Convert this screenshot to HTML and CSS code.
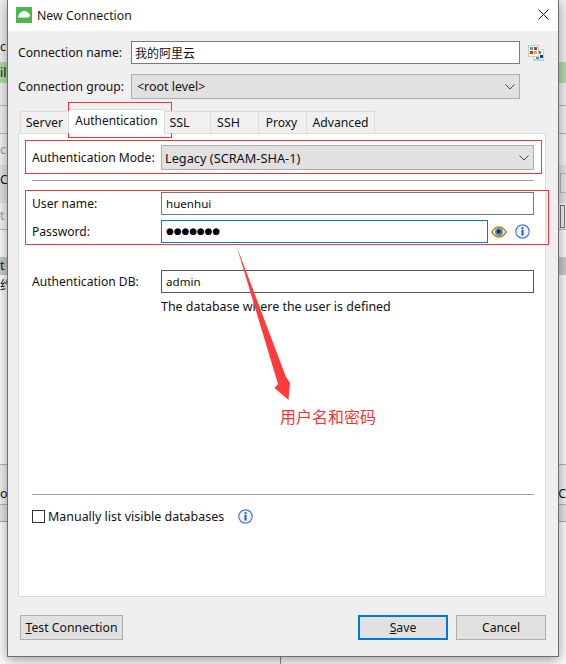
FILE: index.html
```html
<!DOCTYPE html>
<html lang="en">
<head>
<meta charset="utf-8">
<title>New Connection</title>
<link rel="stylesheet" href="styles.css">
</head>
<body>
<div class="desktop">
  <div class="backdrop">
    <div class="bg bg-a"></div>
    <div class="bg bg-b"><span>c</span></div>
    <div class="bg bg-green"><span>il</span></div>
    <div class="bg bg-c"></div>
    <div class="bg bg-d"></div>
    <div class="bg bg-e"><span class="muted">ct</span></div>
    <div class="bg bg-f"><span>Cc</span><i class="bg-btn"></i></div>
    <div class="bg bg-g"><span class="muted">t</span><i class="bg-box"></i></div>
    <div class="bg bg-h"></div>
    <div class="bg bg-i"><span>t</span></div>
    <div class="bg bg-j"><span class="cjk">约</span></div>
    <div class="bg bg-k"><span>or</span><span>C</span></div>
    <div class="bg bg-l"></div>
    <div class="bg bg-m"><i class="bg-vline"></i></div>
  </div>

  <div class="dialog">
    <div class="titlebar">
      <svg class="app-icon" viewBox="0 0 16 16" aria-hidden="true">
        <rect width="16" height="16" fill="#4cb84c"/>
        <path d="M2 10.500C2.600 6.500 5.200 4 8.300 4c3 0 5 2 6 5.300l-1.400.2-.8 1.600-1.500-1.200-1.200 1.400-1.300-1.400-1.600 1.300-1-1.300-1.200 1.300-.6-.9z" fill="#fff"/>
      </svg>
      <span class="title">New Connection</span>
      <svg class="close" viewBox="0 0 11 11" aria-hidden="true"><path d="M.5.5l10 10M10.500.5l-10 10" stroke="#222" stroke-width="1" fill="none"/></svg>
    </div>

    <div class="body">
      <div class="top-row">
        <span class="top-label">Connection name:</span>
        <div class="field name-field cjk-text">我的阿里云</div>
        <svg class="palette" viewBox="0 0 16 16" aria-hidden="true">
          <rect x="5" y="4" width="11" height="12" fill="#ccc"/>
          <rect x="6" y="5" width="9" height="9" fill="#fff"/>
          <rect x="10" y="6" width="3" height="3" fill="#5a9a10"/>
          <rect x="12" y="10" width="3" height="3" fill="#1a30b0"/>
          <rect x="8" y="11" width="3" height="3" fill="#20a8f0"/>
          <rect x="0" y="0" width="11" height="12" fill="#ccc"/>
          <rect x="1" y="1" width="9" height="10" fill="#fff"/>
          <rect x="2" y="2" width="3" height="3" fill="#22d040"/>
          <rect x="6" y="2" width="3" height="3" fill="#a020e0"/>
          <rect x="2" y="6" width="3" height="3" fill="#f02a10"/>
          <rect x="6" y="6" width="3" height="3" fill="#f5b020"/>
        </svg>
      </div>
      <div class="top-row group-row">
        <span class="top-label">Connection group:</span>
        <div class="combo group-combo">
          <span>&lt;root level&gt;</span>
          <svg class="chevron" viewBox="0 0 10 6" aria-hidden="true"><path d="M.5.5L5 5 9.500.5" fill="none" stroke="#444"/></svg>
        </div>
      </div>

      <div class="tabs">
        <div class="tab tab-server">Server</div>
        <div class="tab tab-active">Authentication</div>
        <div class="tab tab-ssl">SSL</div>
        <div class="tab tab-ssh">SSH</div>
        <div class="tab tab-proxy">Proxy</div>
        <div class="tab tab-adv">Advanced</div>
      </div>

      <div class="pane">
        <div class="form-row">
          <span class="form-label">Authentication Mode:</span>
          <div class="combo mode-combo">
            <span>Legacy (SCRAM-SHA-1)</span>
            <svg class="chevron" viewBox="0 0 10 6" aria-hidden="true"><path d="M.5.5L5 5 9.500.5" fill="none" stroke="#444"/></svg>
          </div>
        </div>
        <hr class="sep sep-top">
        <div class="form-row">
          <span class="form-label">User name:</span>
          <div class="field grow">huenhui</div>
        </div>
        <div class="form-row pass-row">
          <span class="form-label">Password:</span>
          <div class="field focus"><span class="dots">●●●●●●●</span></div>
          <svg class="eye" viewBox="0 0 16 14" aria-hidden="true">
            <path d="M.8 7C3 3.600 5.500 2 8 2s5 1.600 7.200 5C13 10.400 10.500 12 8 12S3 10.400.8 7z" fill="#fff" stroke="#c0851a" stroke-width="1.500"/>
            <circle cx="8" cy="7" r="4" fill="#4d8fc0"/>
            <circle cx="7.600" cy="6.400" r="2" fill="#24323f"/>
          </svg>
          <svg class="info" viewBox="0 0 15 15" aria-hidden="true">
            <circle cx="7.500" cy="7.500" r="6.700" fill="#eef3fe" stroke="#4f74e0" stroke-width="1.200"/>
            <rect x="6.500" y="6" width="2" height="5.500" fill="#2a52b8"/>
            <rect x="6.500" y="3.200" width="2" height="2" fill="#2a52b8"/>
          </svg>
        </div>
        <div class="form-row db-row">
          <span class="form-label">Authentication DB:</span>
          <div class="field grow dark">admin</div>
        </div>
        <div class="help">The database where the user is defined</div>
        <hr class="sep sep-bottom">
        <div class="check-row">
          <i class="checkbox"></i>
          <span class="check-label">Manually list visible databases</span>
          <svg class="info info-check" viewBox="0 0 15 15" aria-hidden="true">
            <circle cx="7.500" cy="7.500" r="6.700" fill="#eef3fe" stroke="#4f74e0" stroke-width="1.200"/>
            <rect x="6.500" y="6" width="2" height="5.500" fill="#2a52b8"/>
            <rect x="6.500" y="3.200" width="2" height="2" fill="#2a52b8"/>
          </svg>
        </div>
      </div>

      <div class="footer">
        <div class="btn btn-test"><span><u>T</u>est Connection</span></div>
        <div class="btn btn-save"><span><u>S</u>ave</span></div>
        <div class="btn btn-cancel">Cancel</div>
      </div>
    </div>
  </div>

  <i class="mark mark-tab"></i>
  <i class="mark mark-mode"></i>
  <i class="mark mark-cred"></i>
  <svg class="arrow" viewBox="0 0 566 664" aria-hidden="true">
    <polygon points="236.500,246 286,377 290,383 288.500,400 274.500,388 278,384" fill="#ff3b3b"/>
  </svg>
  <span class="note">用户名和密码</span>
</div>
</body>
</html>
```

FILE: styles.css
```css
* { box-sizing: border-box; }

html, body {
  margin: 0;
  padding: 0;
}

body {
  font-family: "Noto Sans", "Open Sans", sans-serif;
  font-size: 12.450px;
  color: #111;
  background: #fafafa;
}

.desktop {
  position: relative;
  width: 566px;
  height: 664px;
  overflow: hidden;
}

/* window behind the dialog */
.backdrop {
  display: flex;
  flex-direction: column;
  height: 664px;
}

.bg {
  display: flex;
  justify-content: space-between;
  align-items: center;
  line-height: 16px;
  flex: none;
  background: #f0f0f0;
}

.bg span { white-space: nowrap; }
.muted { color: #999; }
.cjk { font-family: "Noto Sans CJK SC", sans-serif; }

.bg-a { height: 39px; }
.bg-b { height: 23px; align-items: flex-start; }
.bg-green { height: 21px; background: #b0dcaa; }
.bg-c { height: 23px; border-bottom: 1px solid #b5b5b5; }
.bg-d { height: 28px; border-bottom: 1px solid #b5b5b5; }
.bg-e { height: 31px; background: #f4f4f4; }
.bg-f { height: 38px; background: #e3e3e3; padding-bottom: 8px; padding-right: 0; }
.bg-g { height: 27px; background: #f4f4f4; border-bottom: 1px solid #b5b5b5; }
.bg-h { height: 27px; background: #fbfbfb; }
.bg-i { height: 18px; background: #c9c9c9; }
.bg-j { height: 189px; background: #fbfbfb; align-items: flex-start; padding-top: 2px; }
.bg-k {
  height: 41px;
  background: #f0f0f0;
  border-top: 1px solid #b5b5b5;
  border-bottom: 1px solid #b5b5b5;
  padding-top: 18px;
  padding-right: 0;
}
.bg-l { height: 17px; background: #e4e4e4; border-bottom: 1px solid #aaa; }
.bg-m {
  flex: 1;
  background: #fbfbfb;
  align-items: flex-end;
  justify-content: flex-start;
}

.bg-btn {
  width: 6px;
  height: 20px;
  margin-top: 6px;
  background: #e8e8e8;
  border: 1px solid #bbb;
  border-right: 0;
}

.bg-box {
  width: 5px;
  height: 23px;
  margin-right: 1px;
  background: #f4f4f4;
  border: 1px solid #777;
}

.bg-vline {
  height: 8px;
  margin-left: 280px;
  border-left: 1px solid #888;
}

/* dialog */
.dialog {
  position: absolute;
  left: 7px;
  top: 0;
  width: 552px;
  height: 657px;
  display: flex;
  flex-direction: column;
  background: #efefef;
  border: 1px solid #6e6e6e;
  border-top: 0;
  box-shadow: 0 3px 12px rgba(0, 0, 0, .38);
}

.titlebar {
  display: flex;
  align-items: center;
  height: 31px;
  flex: none;
  padding: 0 9px 1px 8px;
  background: #fff;
}

.app-icon { width: 16px; height: 16px; flex: none; }
.title { margin-left: 5px; flex: 1; color: #1a1a1a; font-size: 12.300px; }
.close { width: 11px; height: 11px; margin-top: -1px; }

.body {
  flex: 1;
  display: flex;
  flex-direction: column;
  padding: 10px 12px 0 10px;
}

.top-row {
  display: flex;
  align-items: center;
  height: 23px;
}

.group-row {
  height: 25px;
  margin-top: 10px;
}

.top-label { width: 113px; flex: none; white-space: nowrap; font-size: 12.150px; }

.field {
  display: flex;
  align-items: center;
  height: 23px;
  padding-left: 4px;
  background: #fff;
  border: 1px solid #7a7a7a;
  white-space: nowrap;
  font-size: 11.600px;
}

.name-field {
  width: 389px;
  flex: none;
  padding-left: 3px;
  font-size: 12px;
}
.cjk-text { font-family: "Noto Sans", "Noto Sans CJK SC", sans-serif; }

.grow { flex: 1; }
.dark { border-color: #555; }
.focus { width: 327px; flex: none; border-color: #0078d7; }

.combo {
  display: flex;
  align-items: center;
  justify-content: space-between;
  height: 25px;
  padding: 0 4px 0 5px;
  background: #e1e1e1;
  border: 1px solid #adadad;
  white-space: nowrap;
}

.group-combo { width: 389px; flex: none; }
.mode-combo { flex: 1; padding-left: 3px; font-size: 12.750px; }

.chevron { width: 10px; height: 6px; flex: none; }

.palette { width: 16px; height: 16px; flex: none; margin-left: 8px; }

/* tabs */
.tabs {
  display: flex;
  align-items: flex-end;
  height: 24px;
  margin-top: 10px;
  padding-left: 2px;
  flex: none;
  position: relative;
  z-index: 1;
}

.tab {
  display: flex;
  align-items: center;
  justify-content: center;
  height: 22px;
  background: #f0f0f0;
  border: 1px solid #dcdcdc;
  border-bottom: 0;
  border-left: 0;
}

.tab-server { width: 49px; border-left: 1px solid #dcdcdc; }
.tab-active {
  width: 96px;
  height: 25px;
  margin-bottom: -1px;
  padding-bottom: 4px;
  background: #fff;
  font-size: 11.900px;
}
.tab-ssl { width: 46px; padding-right: 16px; }
.tab-ssh { width: 48px; padding-right: 12px; }
.tab-proxy { width: 48px; padding-right: 2px; font-size: 12px; }
.tab-adv { width: 68px; font-size: 12.200px; }

.pane {
  display: flex;
  flex-direction: column;
  height: 464px;
  flex: none;
  padding: 11px 11px 72px 13px;
  background: #fff;
  border: 1px solid #dcdcdc;
}

.form-row {
  display: flex;
  align-items: center;
  flex: none;
}

.form-label { width: 129px; flex: none; white-space: nowrap; font-size: 12.100px; }

.sep {
  height: 1px;
  margin: 0;
  border: 0;
  background: #a0a0a0;
  flex: none;
}

.sep-top { margin: 10px 0 11px; }

.pass-row { margin-top: 5px; }
.db-row { margin-top: 27px; }

.help { margin: 5px 0 0 129px; line-height: 17px; }

.sep-bottom { margin-top: auto; margin-bottom: 14px; }

.dots {
  font-family: "DejaVu Sans", sans-serif;
  font-size: 8.850px;
  color: #000;
  line-height: 1;
}

.eye { width: 16px; height: 14px; margin-left: 3px; flex: none; }
.info { width: 15px; height: 15px; flex: none; }
.pass-row .info { margin-left: 8px; }

.check-row { display: flex; align-items: center; height: 15px; }

.checkbox {
  width: 13px;
  height: 13px;
  flex: none;
  background: #fff;
  border: 1px solid #333;
}

.check-label { margin-left: 3px; white-space: nowrap; }
.info-check { margin-left: 14px; }

/* footer */
.footer {
  display: flex;
  margin-top: 18px;
  padding-left: 2px;
}

.btn {
  display: flex;
  align-items: center;
  justify-content: center;
  height: 25px;
  background: #e1e1e1;
  border: 1px solid #adadad;
  white-space: nowrap;
  font-size: 12.250px;
}

.btn-test { width: 103px; }
.btn-save { width: 90px; margin-left: auto; border: 2px solid #0078d7; }
.btn-cancel { width: 90px; margin-left: 8px; }

/* red annotations laid over the screenshot */
.mark {
  position: absolute;
  border: 1px solid #f33;
}

.mark-tab { left: 68px; top: 102px; width: 104px; height: 36px; }
.mark-mode { left: 25px; top: 140px; width: 517px; height: 34px; }
.mark-cred { left: 25px; top: 190px; width: 524px; height: 55px; }

.arrow {
  position: absolute;
  left: 0;
  top: 0;
  width: 566px;
  height: 664px;
}

.note {
  position: absolute;
  left: 280px;
  top: 405px;
  font-family: "Noto Sans CJK SC", sans-serif;
  font-size: 16px;
  line-height: 23px;
  color: #f33;
  white-space: nowrap;
}
```
